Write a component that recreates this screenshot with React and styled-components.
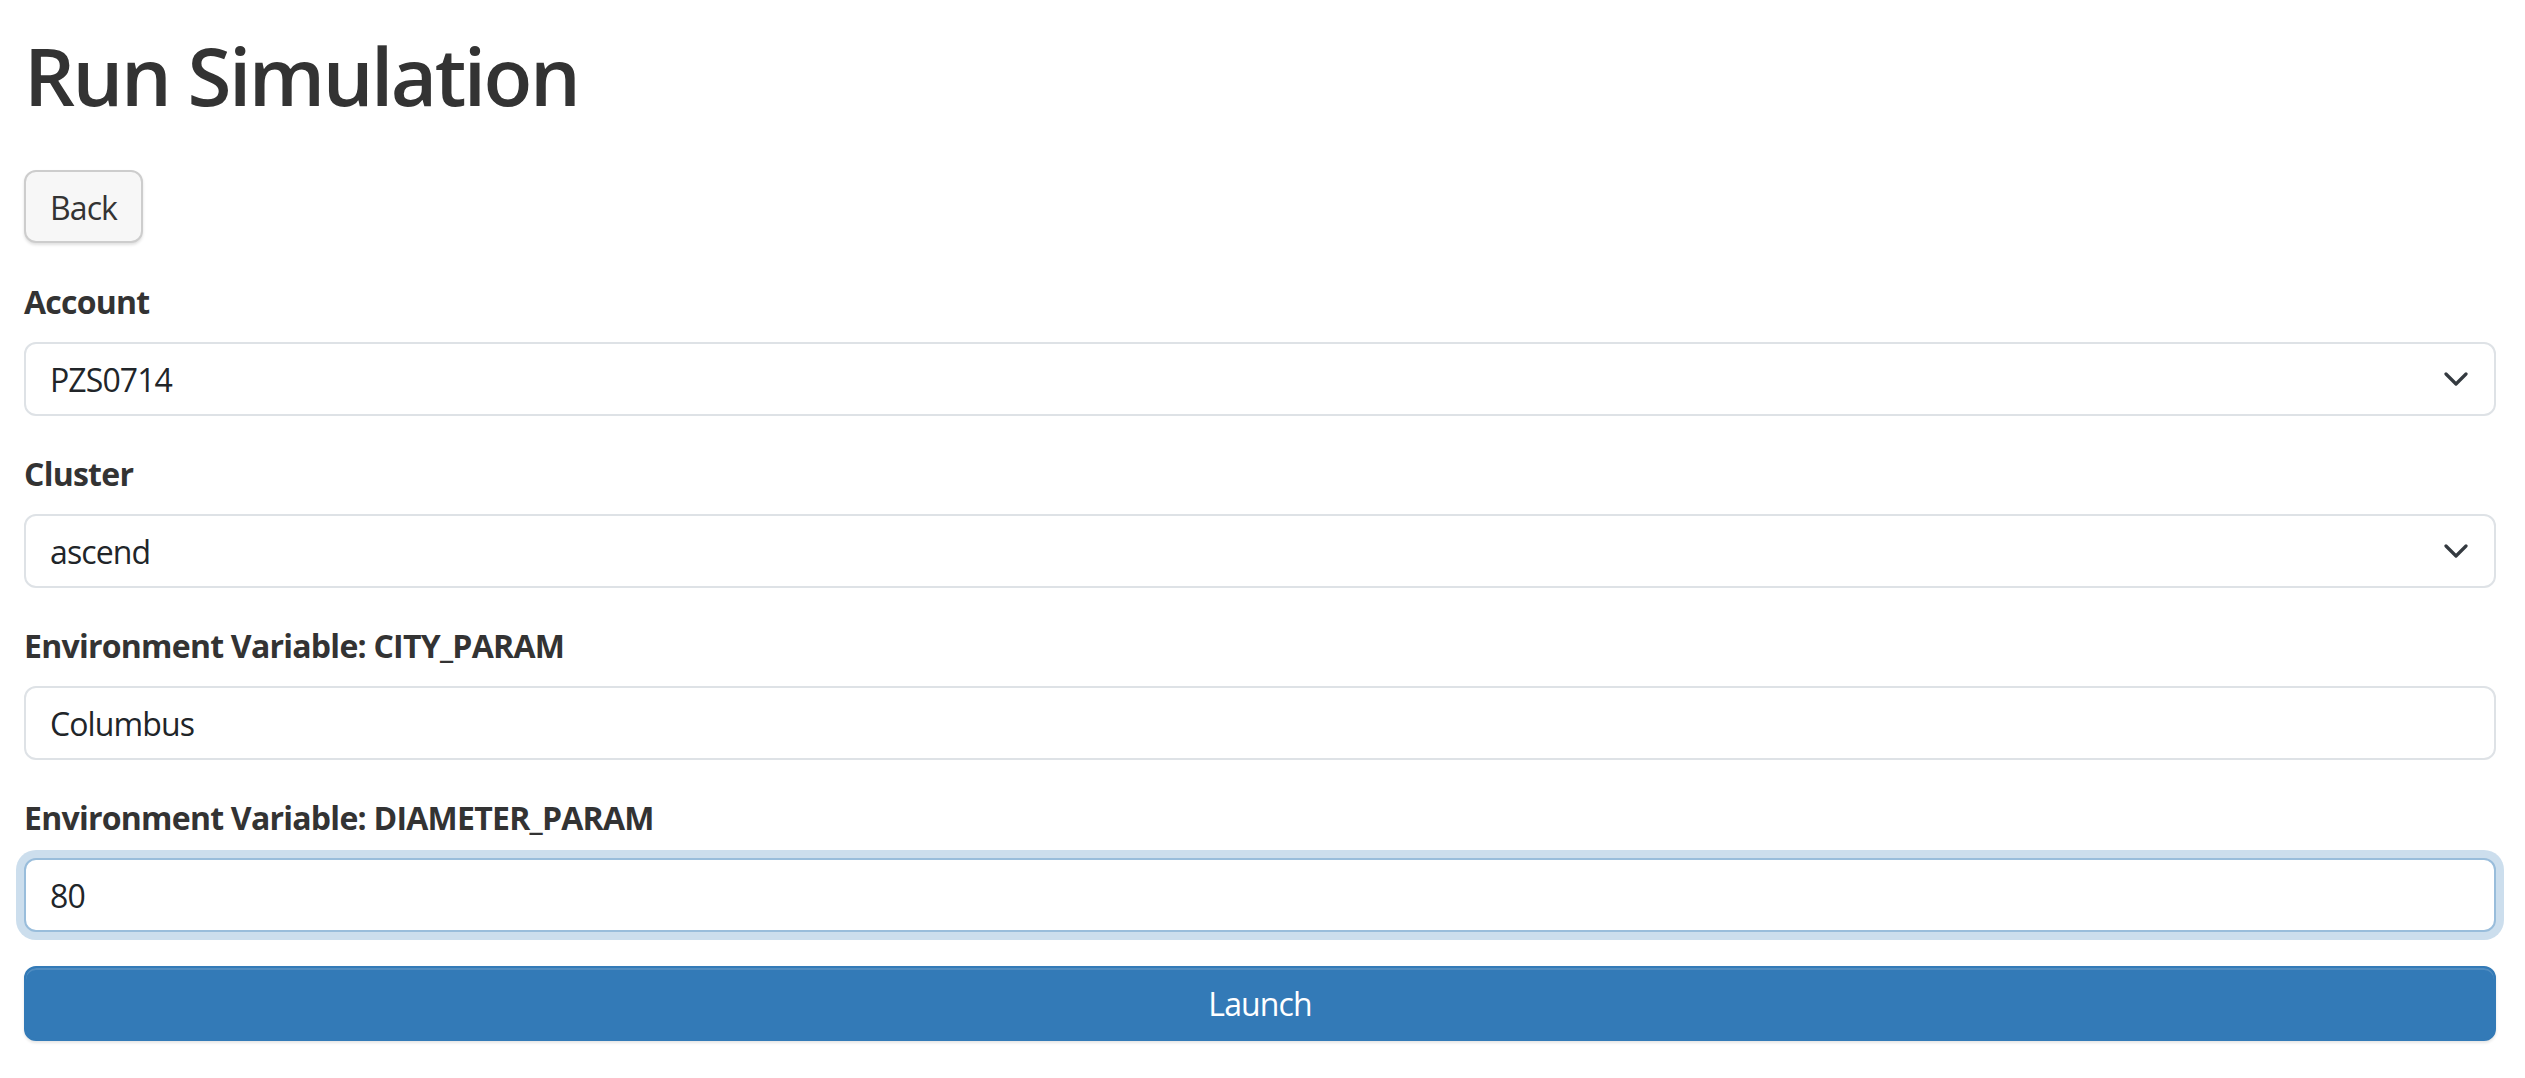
import React from "react";
import styled, { createGlobalStyle, css } from "styled-components";

const FONT = `"Segoe UI", "Open Sans", "Noto Sans", Arial, sans-serif`;

const GlobalStyle = createGlobalStyle`
  html, body {
    margin: 0;
    padding: 0;
    background: #fff;
  }
  body {
    font-family: ${FONT};
    color: #333;
  }
  * {
    box-sizing: border-box;
  }
`;

const Page = styled.main`
  padding: 27px 29px 40px 24px;
`;

const Title = styled.h1`
  margin: 0 0 47px;
  font-size: 80px;
  line-height: 96px;
  font-weight: 600;
  letter-spacing: -2.5px;
  color: #333;
`;

const BackButton = styled.button`
  display: inline-block;
  height: 73px;
  padding: 0 24px;
  font-family: ${FONT};
  font-size: 32px;
  line-height: 71px;
  letter-spacing: -0.9px;
  color: #333;
  background: #f7f7f7;
  border: 2px solid #cdcdcd;
  border-radius: 12px;
  box-shadow: 0 2px 3px rgba(0, 0, 0, 0.12);
  cursor: pointer;
`;

const Form = styled.form`
  display: flex;
  flex-direction: column;
  margin-top: 35px;
`;

const Group = styled.div`
  display: flex;
  flex-direction: column;
  margin-bottom: 34px;
`;

const Label = styled.label`
  font-size: 32px;
  line-height: 48px;
  font-weight: 700;
  letter-spacing: -0.75px;
  color: #333;
  margin-bottom: 16px;
`;

const fieldStyles = css`
  width: 100%;
  height: 74px;
  padding: 0 24px;
  font-family: ${FONT};
  font-size: 32px;
  letter-spacing: -0.9px;
  color: #212529;
  background: #fff;
  border: 2px solid #dee2e6;
  border-radius: 12px;
  outline: none;
  ${({ $focused }) =>
    $focused &&
    css`
      border-color: #99bddb;
      box-shadow: 0 0 0 8px rgba(51, 122, 183, 0.25);
    `}
`;

const TextInput = styled.input`
  ${fieldStyles}
`;

const SelectWrap = styled.div`
  position: relative;
`;

const Select = styled.select`
  ${fieldStyles}
  appearance: none;
  padding-right: 80px;
`;

const Chevron = styled.svg`
  position: absolute;
  right: 28px;
  top: 50%;
  width: 24px;
  height: 14px;
  transform: translateY(-50%);
  pointer-events: none;
`;

const LaunchButton = styled.button`
  width: 100%;
  height: 75px;
  font-family: ${FONT};
  font-size: 32px;
  letter-spacing: -0.9px;
  color: #fff;
  background: #337ab7;
  border: 2px solid #337ab7;
  border-radius: 12px;
  box-shadow: inset 0 2px 0 rgba(255, 255, 255, 0.15), 0 2px 3px rgba(0, 0, 0, 0.1);
  cursor: pointer;
`;

const SelectField = ({ id, label, value, options }) => (
  <Group>
    <Label htmlFor={id}>{label}</Label>
    <SelectWrap>
      <Select id={id} defaultValue={value}>
        {options.map((o) => (
          <option key={o} value={o}>
            {o}
          </option>
        ))}
      </Select>
      <Chevron viewBox="0 0 24 14" fill="none">
        <path
          d="M2 2l10 10 10-10"
          stroke="#343a40"
          strokeWidth="3.2"
          strokeLinecap="round"
          strokeLinejoin="round"
        />
      </Chevron>
    </SelectWrap>
  </Group>
);

const EnvField = ({ id, name, value, focused }) => (
  <Group>
    <Label htmlFor={id}>Environment Variable: {name}</Label>
    <TextInput id={id} type="text" defaultValue={value} $focused={focused} />
  </Group>
);

export default function App() {
  return (
    <Page>
      <GlobalStyle />
      <Title>Run Simulation</Title>
      <BackButton type="button">Back</BackButton>
      <Form onSubmit={(e) => e.preventDefault()}>
        <SelectField
          id="account"
          label="Account"
          value="PZS0714"
          options={["PZS0714"]}
        />
        <SelectField
          id="cluster"
          label="Cluster"
          value="ascend"
          options={["ascend", "cardinal", "pitzer"]}
        />
        <EnvField id="city" name="CITY_PARAM" value="Columbus" />
        <EnvField id="diameter" name="DIAMETER_PARAM" value="80" focused />
        <LaunchButton type="submit">Launch</LaunchButton>
      </Form>
    </Page>
  );
}
